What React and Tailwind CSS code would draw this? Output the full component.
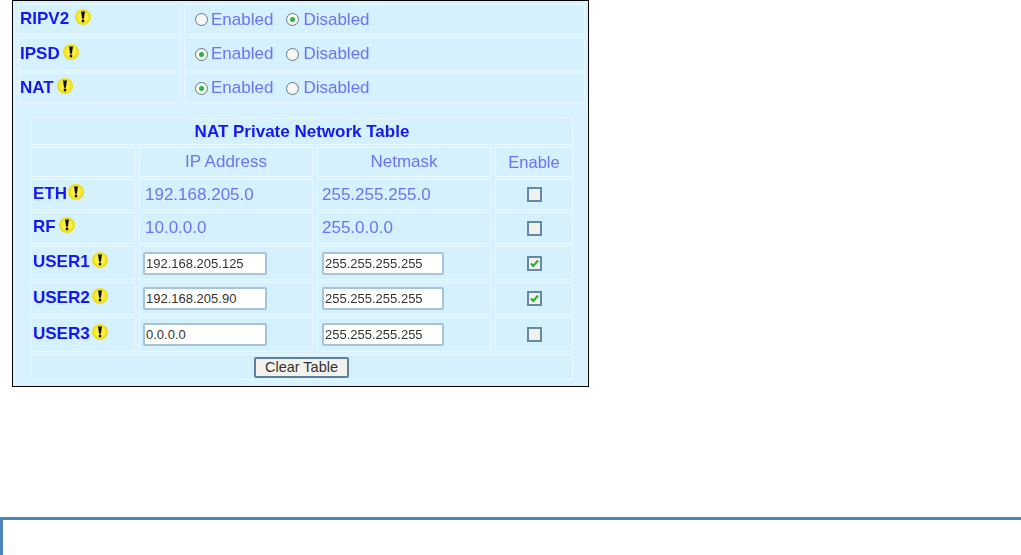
const font = { fontFamily: '"Liberation Sans", Arial, sans-serif' };

function Hint({ className = "" }) {
  return (
    <svg width="16" height="16" viewBox="0 0 16 16" className={"shrink-0 -translate-y-[2px] " + className}>
      <circle cx="8" cy="8" r="8" fill="#efdf24" />
      <circle cx="8" cy="8" r="5.5" fill="#fdf03c" />
      <path d="M6 2.5h4L8.9 9.8H7.1z" fill="#111" />
      <circle cx="8" cy="12" r="1.4" fill="#111" />
    </svg>
  );
}

function Radio({ on }) {
  return (
    <span className="flex h-[13px] w-[13px] shrink-0 items-center justify-center rounded-full border-[1.5px] border-[#66788a] bg-[#f6f6f2]">
      {on && <span className="h-[5px] w-[5px] rounded-full bg-[#2fb344]" />}
    </span>
  );
}

function Check({ on }) {
  return (
    <span className="flex h-[15px] w-[15px] items-center justify-center border-2 border-[#6488a8] bg-[#f1f1ec]">
      {on && (
        <svg width="9" height="9" viewBox="0 0 9 9">
          <path d="M1 4.5l2.3 2.5L8 1.5" fill="none" stroke="#22b022" strokeWidth="2" />
        </svg>
      )}
    </span>
  );
}

const cell = "flex items-center border border-[#e8f8ff] bg-[#d5f1fe]";
const label = "text-[17px] font-bold text-[#1616f0]";
const value = "text-[17px] text-[#6e72f5]";
const field = "h-[23px] rounded-[2px] border-2 border-[#a6c3d8] bg-white px-[1px] text-[13px] text-[#333]";

function TopRow({ name, gap, enabled, h }) {
  return (
    <div className={"flex gap-[4px] " + h}>
      <div className={cell + " w-[162px] pl-[1px] pb-[1px]"}>
        <span className={label}>{name}</span>
        <Hint className={gap} />
      </div>
      <div className={cell + " flex-1 pl-[10px] " + value}>
        <Radio on={enabled} />
        <span className="ml-[3px]">Enabled</span>
        <span className="ml-[13px]"><Radio on={!enabled} /></span>
        <span className="ml-[4px]">Disabled</span>
      </div>
    </div>
  );
}

function TableRow({ name, gap, ip, mask, input, checked, h }) {
  return (
    <div className={"flex gap-[4px] " + h}>
      <div className={cell + " w-[104px] pl-[1px] pb-[2px]"}>
        <span className={label}>{name}</span>
        <Hint className={gap} />
      </div>
      <div className={cell + " w-[174px] " + value + (input ? " pl-[3px]" : " pl-[5px]")}>
        {input ? <input readOnly value={ip} className={field + " w-[124px]"} /> : <span>{ip}</span>}
      </div>
      <div className={cell + " w-[174px] pl-[4px] " + value}>
        {input ? <input readOnly value={mask} className={field + " w-[122px]"} /> : <span>{mask}</span>}
      </div>
      <div className={cell + " flex-1 justify-center"}>
        <Check on={checked} />
      </div>
    </div>
  );
}

export default function App() {
  return (
    <div style={font} className="h-[555px] w-[1021px] overflow-hidden bg-white">
      <div className="ml-[12px] h-[387px] w-[577px] border border-black bg-[#d8f2ff] pl-[5px] pr-[3px] pt-[3px]">
        <div className="flex flex-col gap-[2px] blur-[0.6px]">
          <TopRow name="RIPV2" gap="ml-[6px]" enabled={false} h="h-[31px]" />
          <TopRow name="IPSD" gap="ml-[3px]" enabled h="h-[34px]" />
          <TopRow name="NAT" gap="ml-[3px]" enabled h="h-[30px]" />

          <div className="ml-[13px] mt-[13px] flex w-[542px] flex-col gap-[2px]">
            <div className={cell + " h-[27px] justify-center " + label}>NAT Private Network Table</div>
            <div className={"flex h-[30px] gap-[4px] " + value}>
              <div className={cell + " w-[104px]"} />
              <div className={cell + " w-[174px] justify-center"}>IP Address</div>
              <div className={cell + " w-[174px] justify-center"}>Netmask</div>
              <div className={cell + " flex-1 justify-center text-[16.5px]"}>Enable</div>
            </div>
            <TableRow name="ETH" gap="ml-[1px]" ip="192.168.205.0" mask="255.255.255.0" h="h-[31px]" />
            <TableRow name="RF" gap="ml-[3px]" ip="10.0.0.0" mask="255.0.0.0" h="h-[32px]" />
            <TableRow name="USER1" gap="ml-[2px]" ip="192.168.205.125" mask="255.255.255.255" input checked h="h-[34px]" />
            <TableRow name="USER2" gap="ml-[2px]" ip="192.168.205.90" mask="255.255.255.255" input checked h="h-[33px]" />
            <TableRow name="USER3" gap="ml-[2px]" ip="0.0.0.0" mask="255.255.255.255" input h="h-[35px]" />
            <div className={cell + " h-[26px] justify-center"}>
              <button className="-ml-[1px] h-[21px] w-[95px] rounded-[2px] border-2 border-[#5f7f9f] bg-[#f3f2ec] text-[14.5px] leading-none text-[#333]">
                Clear Table
              </button>
            </div>
          </div>
        </div>
      </div>
      <div className="mt-[130px] h-full border-l-[3px] border-t-[3px] border-[#4f81bd]" />
    </div>
  );
}
